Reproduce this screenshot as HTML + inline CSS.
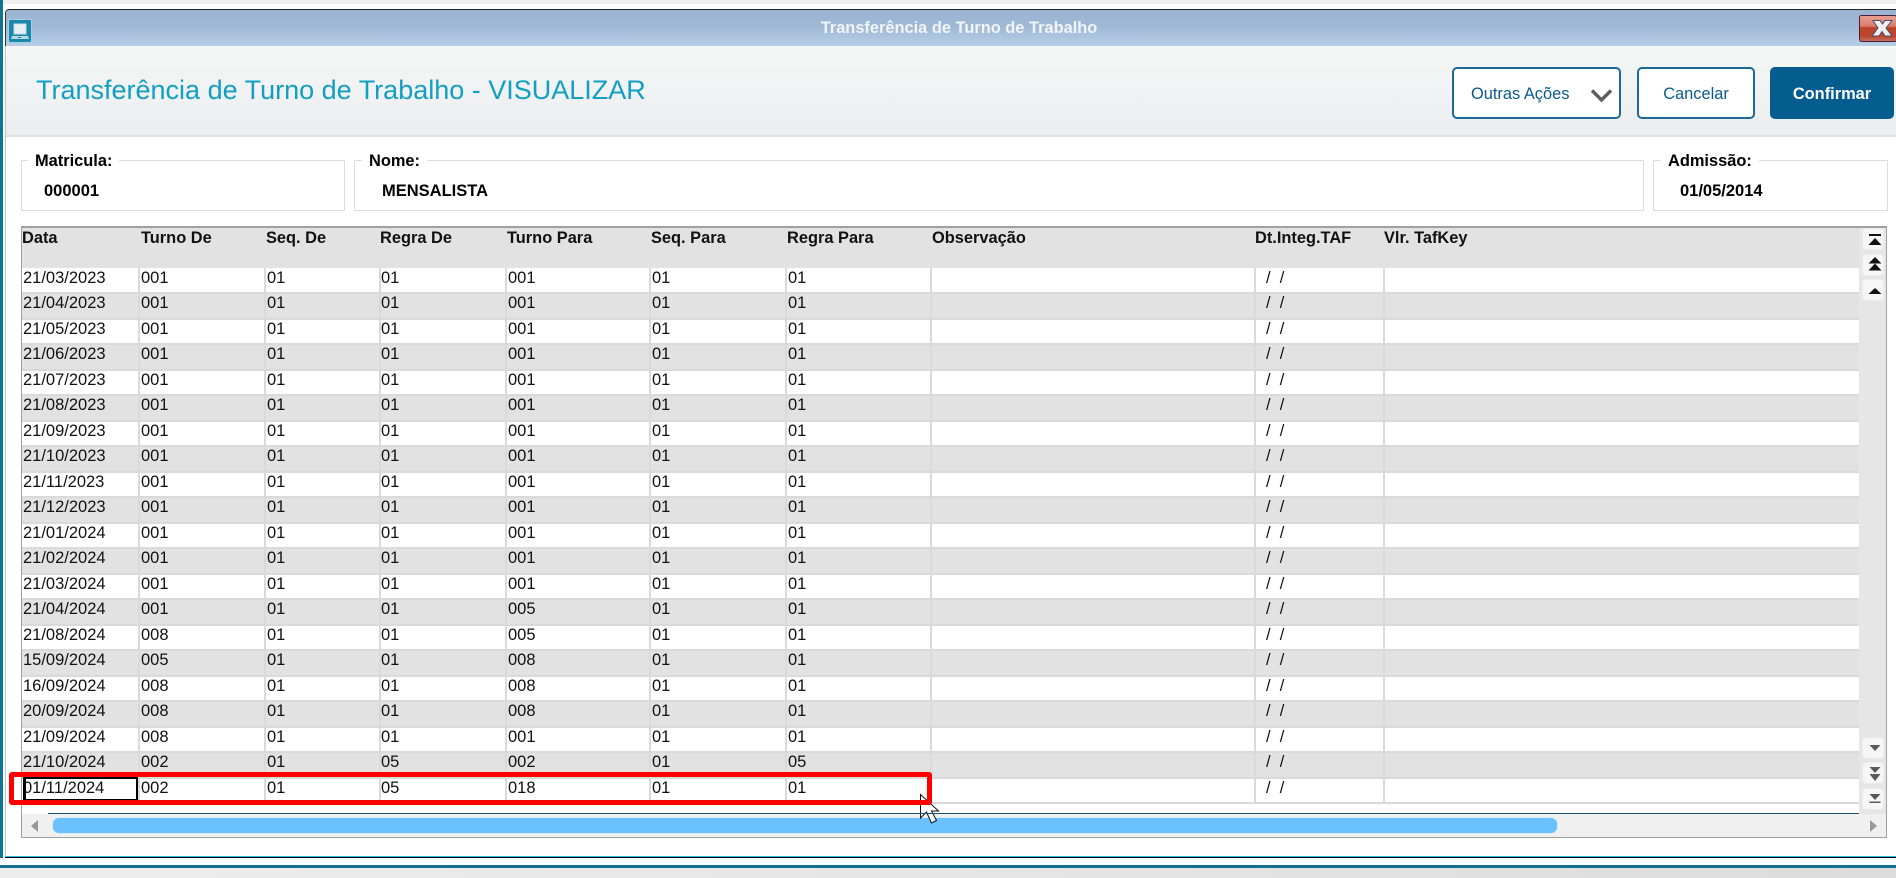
<!DOCTYPE html>
<html lang="pt"><head><meta charset="utf-8"><title>Transferência de Turno de Trabalho</title>
<style>
html,body{margin:0;padding:0;width:1896px;height:878px;overflow:hidden;background:#fff;font-family:"Liberation Sans",Arial,sans-serif;color:#111}
.a{position:absolute}
.fs{position:absolute;top:160px;height:49px;border:1px solid #ddd;box-sizing:content-box;border-radius:1px}
.lg{position:absolute;top:151px;font-weight:bold;font-size:16.4px;line-height:20px;background:#fff;padding:0 7px;color:#000}
.val{position:absolute;top:181px;font-weight:bold;font-size:16.5px;line-height:20px;color:#000}
.btn{position:absolute;top:67px;height:52px;box-sizing:border-box;border:2px solid #1c6a9a;border-radius:5px;background:#fff;color:#0b5a8d;font-size:16.4px;line-height:51px;text-align:center}
.hd span{position:absolute;top:228px;font-weight:bold;font-size:16.4px;line-height:20px}
.r{position:absolute;left:22px;width:1837px;height:26px;background:#fff;font-size:16.5px;line-height:19px}
.g{background:#e2e2e2}
.r span{position:absolute;top:-1px;height:27px;box-sizing:border-box;border-right:2px solid #dadada;border-top:2px solid #dadada;padding:0 0 0 1px;white-space:pre;overflow:hidden}
.f span{top:0;height:26px;border-top:0;padding-top:1px}
.l{height:24px}
.l span{height:25px}
.r span:nth-child(1){left:0;width:118px}
.r span:nth-child(2){left:118px;width:126px}
.r span:nth-child(3){left:244px;width:115px}
.r span:nth-child(4){left:359px;width:126px;padding-left:0}
.r span:nth-child(5){left:485px;width:144px}
.r span:nth-child(6){left:629px;width:136px}
.r span:nth-child(7){left:765px;width:145px}
.r span:nth-child(8){left:910px;width:324px}
.r span:nth-child(9){left:1234px;width:129px;padding-left:10px}
.r span:nth-child(10){left:1363px;width:474px;border-right:0}
.sb{position:absolute;left:1862px;width:22px;height:22px;background:#f6f6f6;border:1px solid #ececec;border-radius:4px;box-sizing:border-box}
.sb svg{position:absolute;left:0;top:0;overflow:visible}
</style></head><body>
<div class="a" style="left:0;top:0;width:1896px;height:4px;background:#f0f0f0"></div>
<div class="a" style="left:0;top:0;width:3px;height:868px;background:#0f7593"></div>

<!-- window -->
<div class="a" style="left:5px;top:9px;width:1891px;height:37px;box-sizing:border-box;border-top:1px solid #222;border-left:1px solid #333;border-radius:4px 0 0 0;background:#fff"></div>
<div class="a" style="left:5px;top:46px;width:1px;height:811px;background:#a9c8dc"></div>
<div class="a" style="left:6px;top:10px;width:1890px;height:36px;background:linear-gradient(#9ab3d1,#9fb8d5 45%,#b6cee7);border-radius:3px 0 0 0"></div>
<div class="a" style="left:14px;top:10px;width:1890px;height:36px;line-height:36px;text-align:center;color:#f1f4f8;font-size:16.4px;font-weight:bold">Transferência de Turno de Trabalho</div>
<svg class="a" style="left:8px;top:19px" width="24" height="24" viewBox="0 0 24 24"><rect x=".5" y=".5" width="23" height="23" rx="2" fill="#1c86ab" stroke="#a8cfe3"/><rect x="2" y="2" width="20" height="20" rx="1" fill="#1789ab"/><rect x="6" y="5" width="12" height="10" fill="#e8eff2" stroke="#cbd9e0"/><path d="M4 17h16l1 3H3z" fill="#bcd8e4"/><rect x="10" y="18" width="3" height="1" fill="#27708e"/></svg>
<svg class="a" style="left:1859px;top:15px" width="37" height="27" viewBox="0 0 37 27"><defs><linearGradient id="cg" x1="0" y1="0" x2="0" y2="1"><stop offset="0" stop-color="#e8a094"/><stop offset=".42" stop-color="#d77c6c"/><stop offset=".46" stop-color="#bd442a"/><stop offset=".8" stop-color="#bb4630"/><stop offset="1" stop-color="#c77365"/></linearGradient></defs><rect x=".5" y=".5" width="37" height="26" rx="2" fill="url(#cg)" stroke="#4a2038"/><path d="M15 6l7 0 2.500 3.500L27 6h7l-6 7.500 6 8h-7l-3-4.500-3 4.500h-7l6-8z" transform="translate(-1 -.5)" fill="#eef0f4" stroke="#4f4a63" stroke-width="1"/></svg>

<!-- header -->
<div class="a" style="left:6px;top:46px;width:1890px;height:89px;background:linear-gradient(#f5f7f6,#ebedf0)"></div>
<div class="a" style="left:6px;top:135px;width:1890px;height:2px;background:#dedfe0"></div>
<div class="a" style="left:36px;top:73px;font-size:27px;line-height:34px;color:#129fc3;white-space:nowrap">Transferência de Turno de Trabalho - VISUALIZAR</div>
<div class="btn" style="left:1452px;width:169px;text-align:left;padding-left:17px">Outras Ações</div>
<svg class="a" style="left:1590px;top:88px" width="24" height="16" viewBox="0 0 24 16"><path d="M2 2.500l9.500 9.500 9.500-9.500" fill="none" stroke="#5d5d5d" stroke-width="3.400"/></svg>
<div class="btn" style="left:1637px;width:118px">Cancelar</div>
<div class="btn" style="left:1770px;width:124px;background:#045c8f;border-color:#045c8f;color:#fff;font-weight:bold">Confirmar</div>

<!-- fieldsets -->
<div class="fs" style="left:21px;width:322px"></div>
<div class="lg" style="left:28px">Matricula:</div>
<div class="val" style="left:44px">000001</div>
<div class="fs" style="left:354px;width:1288px"></div>
<div class="lg" style="left:362px">Nome:</div>
<div class="val" style="left:382px">MENSALISTA</div>
<div class="fs" style="left:1653px;width:233px"></div>
<div class="lg" style="left:1661px">Admissão:</div>
<div class="val" style="left:1680px">01/05/2014</div>

<!-- grid -->
<div class="a" style="left:21px;top:226px;width:1866px;height:612px;box-sizing:border-box;border:1px solid #a0a0a0;border-top-width:2px;background:#fff"></div>
<div class="a" style="left:22px;top:228px;width:1837px;height:40px;background:#e2e2e2"></div>
<div class="a" style="left:1859px;top:228px;width:27px;height:586px;background:#e6e6e6"></div>
<div class="hd">
<span style="left:22px">Data</span><span style="left:141px">Turno De</span><span style="left:266px">Seq. De</span><span style="left:380px">Regra De</span><span style="left:507px">Turno Para</span><span style="left:651px">Seq. Para</span><span style="left:787px">Regra Para</span><span style="left:932px">Observação</span><span style="left:1255px">Dt.Integ.TAF</span><span style="left:1384px">Vlr. TafKey</span>
</div>

<div class="r f" style="top:268px"><span>21/03/2023</span><span>001</span><span>01</span><span>01</span><span>001</span><span>01</span><span>01</span><span></span><span>/  /</span><span></span></div>
<div class="r g" style="top:293px"><span>21/04/2023</span><span>001</span><span>01</span><span>01</span><span>001</span><span>01</span><span>01</span><span></span><span>/  /</span><span></span></div>
<div class="r" style="top:319px"><span>21/05/2023</span><span>001</span><span>01</span><span>01</span><span>001</span><span>01</span><span>01</span><span></span><span>/  /</span><span></span></div>
<div class="r g" style="top:344px"><span>21/06/2023</span><span>001</span><span>01</span><span>01</span><span>001</span><span>01</span><span>01</span><span></span><span>/  /</span><span></span></div>
<div class="r" style="top:370px"><span>21/07/2023</span><span>001</span><span>01</span><span>01</span><span>001</span><span>01</span><span>01</span><span></span><span>/  /</span><span></span></div>
<div class="r g" style="top:395px"><span>21/08/2023</span><span>001</span><span>01</span><span>01</span><span>001</span><span>01</span><span>01</span><span></span><span>/  /</span><span></span></div>
<div class="r" style="top:421px"><span>21/09/2023</span><span>001</span><span>01</span><span>01</span><span>001</span><span>01</span><span>01</span><span></span><span>/  /</span><span></span></div>
<div class="r g" style="top:446px"><span>21/10/2023</span><span>001</span><span>01</span><span>01</span><span>001</span><span>01</span><span>01</span><span></span><span>/  /</span><span></span></div>
<div class="r" style="top:472px"><span>21/11/2023</span><span>001</span><span>01</span><span>01</span><span>001</span><span>01</span><span>01</span><span></span><span>/  /</span><span></span></div>
<div class="r g" style="top:497px"><span>21/12/2023</span><span>001</span><span>01</span><span>01</span><span>001</span><span>01</span><span>01</span><span></span><span>/  /</span><span></span></div>
<div class="r" style="top:523px"><span>21/01/2024</span><span>001</span><span>01</span><span>01</span><span>001</span><span>01</span><span>01</span><span></span><span>/  /</span><span></span></div>
<div class="r g" style="top:548px"><span>21/02/2024</span><span>001</span><span>01</span><span>01</span><span>001</span><span>01</span><span>01</span><span></span><span>/  /</span><span></span></div>
<div class="r" style="top:574px"><span>21/03/2024</span><span>001</span><span>01</span><span>01</span><span>001</span><span>01</span><span>01</span><span></span><span>/  /</span><span></span></div>
<div class="r g" style="top:599px"><span>21/04/2024</span><span>001</span><span>01</span><span>01</span><span>005</span><span>01</span><span>01</span><span></span><span>/  /</span><span></span></div>
<div class="r" style="top:625px"><span>21/08/2024</span><span>008</span><span>01</span><span>01</span><span>005</span><span>01</span><span>01</span><span></span><span>/  /</span><span></span></div>
<div class="r g" style="top:650px"><span>15/09/2024</span><span>005</span><span>01</span><span>01</span><span>008</span><span>01</span><span>01</span><span></span><span>/  /</span><span></span></div>
<div class="r" style="top:676px"><span>16/09/2024</span><span>008</span><span>01</span><span>01</span><span>008</span><span>01</span><span>01</span><span></span><span>/  /</span><span></span></div>
<div class="r g" style="top:701px"><span>20/09/2024</span><span>008</span><span>01</span><span>01</span><span>008</span><span>01</span><span>01</span><span></span><span>/  /</span><span></span></div>
<div class="r" style="top:727px"><span>21/09/2024</span><span>008</span><span>01</span><span>01</span><span>001</span><span>01</span><span>01</span><span></span><span>/  /</span><span></span></div>
<div class="r g" style="top:752px"><span>21/10/2024</span><span>002</span><span>01</span><span>05</span><span>002</span><span>01</span><span>05</span><span></span><span>/  /</span><span></span></div>
<div class="r l" style="top:778px"><span>01/11/2024</span><span>002</span><span>01</span><span>05</span><span>018</span><span>01</span><span>01</span><span></span><span>/  /</span><span></span></div>
<div class="a" style="left:22px;top:802px;width:1837px;height:2px;background:#dadada"></div>

<!-- focus cell -->
<div class="a" style="left:23px;top:777px;width:115px;height:24px;box-sizing:border-box;border:2px solid #000;border-left-width:3px;border-right-width:2px"></div>

<!-- vertical scroll buttons -->
<div class="sb" style="top:228px"><svg width="22" height="22" viewBox="0 0 22 22"><rect x="6" y="5" width="12" height="2" fill="#111"/><path d="M12 9l6.500 7h-13z" fill="#111"/></svg></div>
<div class="sb" style="top:254px"><svg width="22" height="22" viewBox="0 0 22 22"><path d="M12 2l6.500 6.500h-13zM12 8.500l6.500 7h-13z" fill="#111"/></svg></div>
<div class="sb" style="top:279px"><svg width="22" height="22" viewBox="0 0 22 22"><path d="M12 8l6.500 6h-13z" fill="#111"/></svg></div>
<div class="sb" style="top:737px"><svg width="22" height="21" viewBox="0 0 22 21"><path d="M6.500 7h11L12 13z" fill="#5a5a5a"/></svg></div>
<div class="sb" style="top:762px"><svg width="22" height="21" viewBox="0 0 22 21"><path d="M6.500 4h11L12 10zM6.500 11h11L12 18z" fill="#5a5a5a"/></svg></div>
<div class="sb" style="top:788px"><svg width="22" height="21" viewBox="0 0 22 21"><path d="M6.500 5h11L12 11z" fill="#5a5a5a"/><rect x="6.500" y="12.500" width="11" height="1.500" fill="#5a5a5a"/></svg></div>

<!-- horizontal scrollbar -->
<div class="a" style="left:22px;top:814px;width:1864px;height:23px;background:#f0f0f0"></div>
<svg class="a" style="left:30px;top:819px" width="9" height="14" viewBox="0 0 9 14"><path d="M8 1v12L1 7z" fill="#999"/></svg>
<svg class="a" style="left:1869px;top:819px" width="9" height="14" viewBox="0 0 9 14"><path d="M1 1v12l7-6z" fill="#999"/></svg>
<div class="a" style="left:53px;top:818px;width:1504px;height:15px;border-radius:6px;background:#6ac1fe;box-shadow:0 0 0 1px #d8ecfa"></div>

<!-- cursor -->
<svg class="a" style="left:918px;top:793px" width="24" height="32" viewBox="0 0 24 32"><path d="M2.500 1.500V25l6-6 5 11 5-2.500-5-9.500h7z" fill="#fff" stroke="#111" stroke-width="1"/></svg>
<div class="a" style="left:48px;top:813px;width:1811px;height:1px;background:#14527a"></div>

<!-- red highlight -->
<div class="a" style="left:9px;top:772px;width:923px;height:33px;box-sizing:border-box;border:5px solid #fe0000;border-radius:3px"></div>

<!-- bottom lines -->
<div class="a" style="left:6px;top:856px;width:1890px;height:1px;background:#22bfe0"></div>
<div class="a" style="left:5px;top:857px;width:1891px;height:1px;background:#000"></div>
<div class="a" style="left:0;top:858px;width:1896px;height:7px;background:#fff"></div>
<div class="a" style="left:0;top:865px;width:1896px;height:3px;background:#0f7090"></div>
<div class="a" style="left:0;top:868px;width:1896px;height:10px;background:linear-gradient(90deg,#ededed,#e4e4e4 60%,#dcdcdc)"></div>
</body></html>
